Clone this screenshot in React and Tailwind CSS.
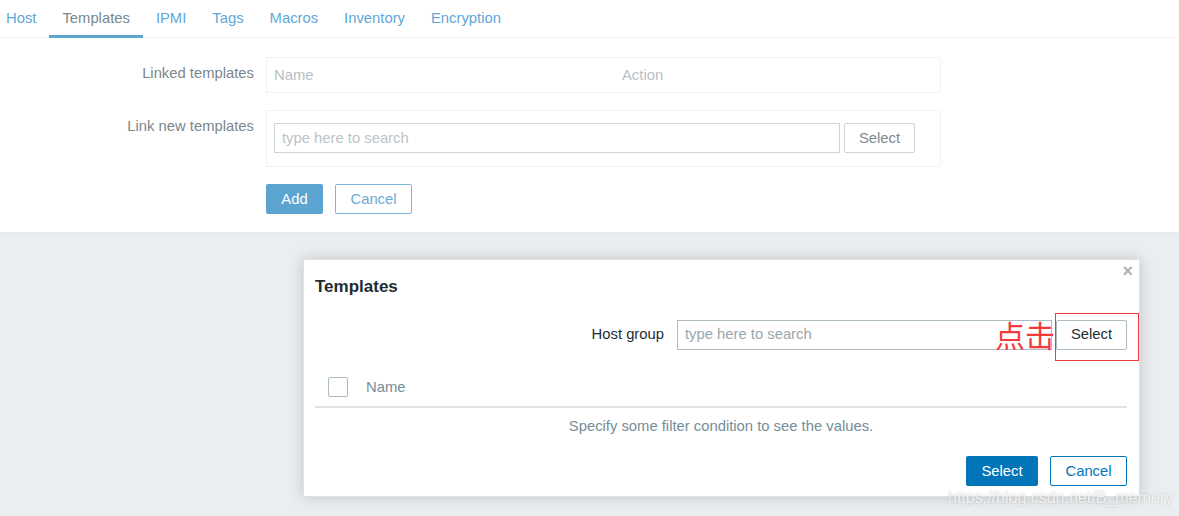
import React from "react";

const tabs = ["Host", "Templates", "IPMI", "Tags", "Macros", "Inventory", "Encryption"];

function Tabs() {
  return (
    <div className="flex h-[38px] border-b border-[#f0f2f3] pl-[6px]">
      {tabs.map((t) => (
        <div
          key={t}
          className={
            t === "Templates"
              ? "mr-[13px] -ml-[13px] px-[13px] pt-[7px] border-b-[3px] border-[#5ca5d1] text-[#768891] -mb-px"
              : "mr-[26px] pt-[7px] text-[#5fa7d8]"
          }
        >
          {t}
        </div>
      ))}
    </div>
  );
}

function FormArea() {
  return (
    <div className="bg-white pb-[18px] border-b border-[#e6e9eb]">
      <Tabs />
      <div className="pt-[19px]">
        <div className="flex">
          <div className="w-[254px] text-right text-[#7b868c] pt-[5px]">Linked templates</div>
          <div className="ml-[12px] w-[675px] h-[36px] border border-[#f0f2f3] flex items-center text-[#b8c0c4]">
            <span className="ml-[7px] w-[348px]">Name</span>
            <span>Action</span>
          </div>
        </div>
        <div className="flex mt-[17px]">
          <div className="w-[254px] text-right text-[#7b868c] pt-[5px]">Link new templates</div>
          <div className="ml-[12px] w-[675px] h-[57px] border border-[#f0f2f3] flex items-center">
            <div className="ml-[7px] -mt-[1px] w-[566px] h-[30px] border border-[#cdd5d9] flex items-center pl-[7px] text-[#bcc3c7]">
              type here to search
            </div>
            <div className="ml-[4px] -mt-[1px] w-[71px] h-[30px] border border-[#cdd5d9] rounded-[2px] flex items-center justify-center text-[#7e8a90]">
              Select
            </div>
          </div>
        </div>
        <div className="flex mt-[17px] ml-[266px] gap-[12px]">
          <div className="w-[57px] h-[30px] bg-[#5ca5d1] rounded-[2px] text-white flex items-center justify-center">Add</div>
          <div className="w-[77px] h-[30px] border border-[#7db6db] rounded-[2px] text-[#6aaad5] flex items-center justify-center">Cancel</div>
        </div>
      </div>
    </div>
  );
}

function Modal() {
  return (
    <div className="absolute left-[303px] top-[259px] w-[837px] h-[238px] bg-white border border-[#dfe3e5] shadow-[0_0_14px_rgba(0,0,0,0.18)]">
      <div className="absolute right-[6px] top-[-2px] text-[#aab3b8] text-[18px] font-bold">×</div>
      <div className="pl-[11px] pr-[12px]">
        <div className="pt-[14px] text-[17px] font-bold text-[#1f2c33]">Templates</div>
        <div className="flex justify-end items-center mt-[20px] relative">
          <span className="text-[#1f2c33] mr-[13px]">Host group</span>
          <div className="w-[375px] h-[30px] border border-[#acbbc2] flex items-center pl-[7px] text-[#9aa6ac]">
            type here to search
          </div>
          <div className="ml-[4px] w-[71px] h-[30px] border border-[#acbbc2] rounded-[2px] flex items-center justify-center text-[#1f2c33]">
            Select
          </div>
          <div className="absolute right-[-12px] top-[-7px] w-[84px] h-[48px] border border-[#f23c3c]"></div>
          <div
            className="absolute right-[72px] top-[-6px] text-[30px] leading-[40px] text-[#f23c3c]"
            style={{ fontFamily: '"Noto Sans CJK SC", sans-serif' }}
          >
            点击
          </div>
        </div>
        <div className="flex items-center pt-[26px] pb-[8px] border-b-2 border-[#dfe4e7]">
          <div className="ml-[13px] w-[20px] h-[20px] border border-[#acbbc2] rounded-[2px]"></div>
          <span className="ml-[18px] text-[#768d99]">Name</span>
        </div>
        <div className="text-center text-[#768d99] pt-[7px]">Specify some filter condition to see the values.</div>
        <div className="flex justify-end gap-[12px] mt-[19px]">
          <div className="w-[72px] h-[30px] bg-[#0275b8] rounded-[2px] text-white flex items-center justify-center">Select</div>
          <div className="w-[77px] h-[30px] border border-[#0275b8] rounded-[2px] text-[#0275b8] flex items-center justify-center">Cancel</div>
        </div>
      </div>
    </div>
  );
}

export default function App() {
  return (
    <div
      className="relative w-[1179px] h-[516px] bg-[#ebeef0] overflow-hidden text-[14.8px]"
      style={{ fontFamily: '"Liberation Sans", Arial, sans-serif' }}
    >
      <FormArea />
      <Modal />
      <div className="absolute left-[948px] top-[486px] text-[16px] text-white/80 [text-shadow:0_0_2px_rgba(0,0,0,0.25)]">
        https://blog.csdn.net/B_memory
      </div>
    </div>
  );
}
